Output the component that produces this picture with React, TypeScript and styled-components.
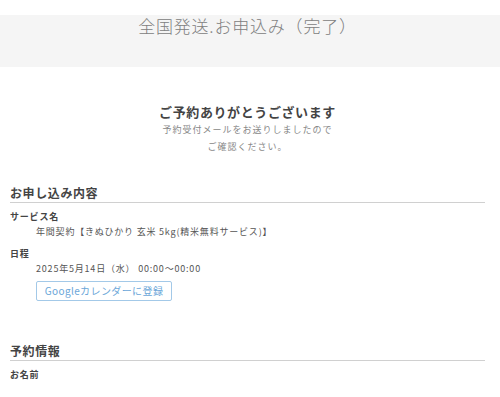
import React from "react";
import styled, { createGlobalStyle } from "styled-components";

const GlobalStyle = createGlobalStyle`
  html, body {
    margin: 0;
    padding: 0;
    background: #fff;
  }
  body {
    font-family: "Noto Sans CJK JP", "Noto Sans", sans-serif;
    color: #333;
  }
`;

const PageHeader = styled.header`
  margin-top: 15px;
  height: 52px;
  background: #f5f5f5;
  padding: 0 15px 0 10px;
`;

const PageTitle = styled.h1`
  margin: 0;
  font-size: 17px;
  font-weight: 300;
  line-height: 21px;
  letter-spacing: 0.8px;
  color: #808080;
  text-align: center;
`;

const Main = styled.main`
  padding: 0 15px 0 10px;
`;

const Thanks = styled.div`
  margin-top: 36px;
  text-align: center;
`;

const ThanksTitle = styled.h2`
  margin: 0;
  font-size: 13px;
  font-weight: 700;
  line-height: 18px;
  letter-spacing: 0.6px;
  color: #444;
`;

const ThanksText = styled.p`
  margin: 0;
  font-size: 9px;
  line-height: 17px;
  letter-spacing: 1px;
  color: #888;
`;

const Section = styled.section<{ $gap: number }>`
  margin-top: ${(p) => p.$gap}px;
`;

const SectionTitle = styled.h3`
  margin: 0;
  font-size: 12px;
  font-weight: 700;
  line-height: 18px;
  letter-spacing: 0.6px;
  color: #444;
  border-bottom: 1px solid #d0d0d0;
`;

const Item = styled.dl`
  margin: 7px 0 0;
  & + & {
    margin-top: 8px;
  }
`;

const Label = styled.dt`
  font-size: 9px;
  font-weight: 700;
  line-height: 14px;
  letter-spacing: 0.8px;
  color: #444;
`;

const Value = styled.dd`
  margin: 1px 0 0 26px;
  font-size: 9px;
  line-height: 14px;
  letter-spacing: 0.8px;
  color: #555;
`;

const CalendarButton = styled.button`
  display: block;
  margin: 5px 0 0 26px;
  width: 136px;
  height: 20px;
  padding: 0;
  background: #fff;
  border: 1px solid #a3c9e8;
  border-radius: 2px;
  font-family: inherit;
  font-size: 10px;
  line-height: 18px;
  letter-spacing: 0.4px;
  color: #6aa6d8;
  cursor: pointer;
`;

export default function App() {
  return (
    <>
      <GlobalStyle />
      <PageHeader>
        <PageTitle>全国発送.お申込み（完了）</PageTitle>
      </PageHeader>
      <Main>
        <Thanks>
          <ThanksTitle>ご予約ありがとうございます</ThanksTitle>
          <ThanksText>
            予約受付メールをお送りしましたので
            <br />
            ご確認ください。
          </ThanksText>
        </Thanks>

        <Section $gap={29}>
          <SectionTitle>お申し込み内容</SectionTitle>
          <Item>
            <Label>サービス名</Label>
            <Value>年間契約【きぬひかり 玄米 5kg(精米無料サービス)】</Value>
          </Item>
          <Item>
            <Label>日程</Label>
            <Value>2025年5月14日（水） 00:00〜00:00</Value>
          </Item>
          <CalendarButton type="button">Googleカレンダーに登録</CalendarButton>
        </Section>

        <Section $gap={41}>
          <SectionTitle>予約情報</SectionTitle>
          <Item>
            <Label>お名前</Label>
          </Item>
        </Section>
      </Main>
    </>
  );
}
